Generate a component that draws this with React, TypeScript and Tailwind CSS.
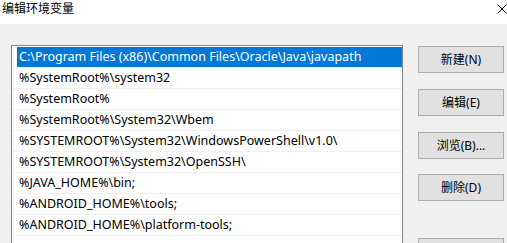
import React from "react";

const rows = [
  "C:\\Program Files (x86)\\Common Files\\Oracle\\Java\\javapath",
  "%SystemRoot%\\system32",
  "%SystemRoot%",
  "%SystemRoot%\\System32\\Wbem",
  "%SYSTEMROOT%\\System32\\WindowsPowerShell\\v1.0\\",
  "%SYSTEMROOT%\\System32\\OpenSSH\\",
  "%JAVA_HOME%\\bin;",
  "%ANDROID_HOME%\\tools;",
  "%ANDROID_HOME%\\platform-tools;",
  "",
];

const font = { fontFamily: '"Noto Sans", "Noto Sans CJK SC", sans-serif' };

function Btn({ label, className }: { label: string; className?: string }) {
  return (
    <div
      className={
        "w-[86px] h-[27px] shrink-0 border border-[#adadad] bg-[#e1e1e1] flex items-center justify-center text-[12px] text-black " +
        (className ?? "")
      }
    >
      {label}
    </div>
  );
}

export default function App() {
  return (
    <div
      className="w-[507px] h-[243px] overflow-hidden bg-[#f0f0f0] flex flex-col"
      style={font}
    >
      <div className="h-[24px] shrink-0 bg-white flex items-start justify-between">
        <div className="text-[12px] leading-[12px] pl-[2px] pt-[3px] text-black">编辑环境变量</div>
        <svg width="10" height="10" viewBox="0 0 10 10" className="mt-[4px] mr-[0px]">
          <path d="M0.5 0.5 L9.5 9.5 M9.5 0.5 L0.5 9.5" stroke="#000" strokeWidth="1" />
        </svg>
      </div>
      <div className="flex flex-1 min-h-0">
        <div className="ml-[11px] mt-[21px] w-[392px] shrink-0 border-l border-t border-r border-[#828790] bg-white pt-[1px] overflow-hidden">
          {rows.map((r, i) => (
            <div key={i} className="h-[21px] border-b border-[#f0f0f0] flex">
              <div
                className={
                  "ml-[5px] flex-1 h-[20px] flex items-center pl-[2px] text-[12.5px] whitespace-nowrap " +
                  (i === 0 ? "bg-[#0078d7] text-white" : "text-black")
                }
              >
                {r}
              </div>
            </div>
          ))}
        </div>
        <div className="ml-[15px] flex flex-col">
          <Btn label="新建(N)" className="mt-[22px]" />
          <Btn label="编辑(E)" className="mt-[16px]" />
          <Btn label="浏览(B)..." className="mt-[16px]" />
          <Btn label="删除(D)" className="mt-[15px]" />
          <Btn label="" className="mt-[37px]" />
        </div>
      </div>
    </div>
  );
}
